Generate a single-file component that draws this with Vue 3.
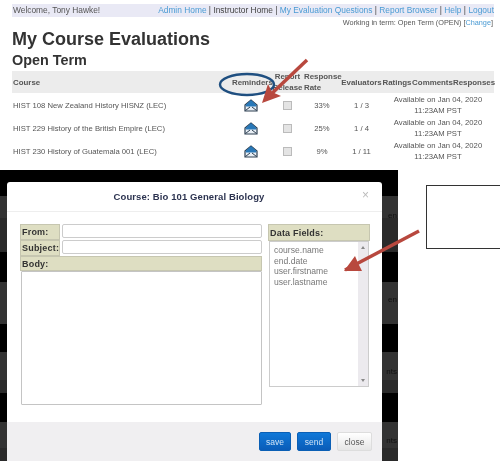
<template>
  <div class="page">
    <div class="top">
      <div class="topbar">
        <span>Welcome, Tony Hawke!</span>
        <span class="links">
          <a>Admin Home</a> | Instructor Home | <a>My Evaluation Questions</a> | <a>Report Browser</a> | <a>Help</a> | <a>Logout</a>
        </span>
      </div>
      <div class="term">Working in term: Open Term (OPEN) [<a>Change</a>]</div>
      <h1>My Course Evaluations</h1>
      <h2>Open Term</h2>
      <table class="courses">
        <thead>
          <tr>
            <th class="left">Course</th>
            <th>Reminders</th>
            <th class="wrap">Report Release</th>
            <th class="wrap left">Response Rate</th>
            <th>Evaluators</th>
            <th>Ratings</th>
            <th>Comments</th>
            <th>Responses</th>
          </tr>
        </thead>
        <tbody>
          <tr v-for="c in courses" :key="c.name">
            <td class="left">{{ c.name }}</td>
            <td>
              <svg class="mail" viewBox="0 0 14 13" width="14" height="13">
                <path d="M1 6 L7 1 L13 6 L13 12 L1 12 Z" fill="#e8eef4" stroke="#2c3e50" stroke-width="1.2" />
                <path d="M1.5 6 L7 1 L12.5 6 L12 7.5 L2 7.5 Z" fill="#2878b8" />
                <path d="M1.5 11.5 L6 8 M12.5 11.5 L8 8" stroke="#2c3e50" stroke-width="1" fill="none" />
              </svg>
            </td>
            <td><span class="check"></span></td>
            <td>{{ c.rate }}</td>
            <td>{{ c.evals }}</td>
            <td colspan="3" class="avail">Available on Jan 04, 2020<br />11:23AM PST</td>
          </tr>
        </tbody>
      </table>
    </div>

    <div class="bottom">
      <div class="backdrop">
        <span class="ghost g1">en</span>
        <span class="ghost g2">en</span>
        <span class="ghost g3">nts</span>
        <span class="ghost g4">nts</span>
        <div class="modal">
          <div class="modal-head">
            <span class="modal-title">Course: Bio 101 General Biology</span>
            <span class="modal-x">×</span>
          </div>
          <div class="modal-body">
            <div class="form-left">
              <div class="field-row">
                <label class="tag">From:</label>
                <input class="inp" type="text" />
              </div>
              <div class="field-row">
                <label class="tag">Subject:</label>
                <input class="inp" type="text" />
              </div>
              <div class="tag body-tag">Body:</div>
              <div class="body-box"></div>
            </div>
            <div class="form-right">
              <div class="tag fields-tag">Data Fields:</div>
              <div class="listbox">
                <div class="list-items">
                  <div v-for="f in fields" :key="f">{{ f }}</div>
                </div>
                <div class="scroll">
                  <span class="up"></span>
                  <span class="down"></span>
                </div>
              </div>
            </div>
          </div>
          <div class="modal-foot">
            <button class="btn blue save">save</button>
            <button class="btn blue send">send</button>
            <button class="btn plain">close</button>
          </div>
        </div>
      </div>
      <div class="side">
        <div class="blank"></div>
      </div>
    </div>

    <svg class="marks" viewBox="0 0 500 463" width="500" height="463">
      <ellipse cx="247" cy="84.5" rx="27" ry="10.5" fill="none" stroke="#1f4f80" stroke-width="2.4" />
      <g fill="none" stroke="#b8483e" stroke-width="3.5">
        <path d="M307 60 L266 99" />
        <path d="M345 270 L419 231" />
      </g>
      <path d="M262 103 L268 84 L272 92 L281 96 Z" fill="#b8483e" />
      <path d="M344 271 L355 256 L358 263 L362 271 Z" fill="#b8483e" />
    </svg>
  </div>
</template>

<script setup>
const courses = [
  { name: 'HIST 108 New Zealand History HISNZ (LEC)', rate: '33%', evals: '1 / 3' },
  { name: 'HIST 229 History of the British Empire (LEC)', rate: '25%', evals: '1 / 4' },
  { name: 'HIST 230 History of Guatemala 001 (LEC)', rate: '9%', evals: '1 / 11' }
]

const fields = ['course.name', 'end.date', 'user.firstname', 'user.lastname']
</script>

<style>
html, body {
  margin: 0;
  background: #fff;
}
</style>

<style scoped>
.page {
  position: relative;
  width: 500px;
  height: 463px;
  overflow: hidden;
  background: #fff;
  font-family: "Liberation Sans", Arial, sans-serif;
  color: #555;
  filter: blur(0.35px);
}

.top {
  height: 170px;
  padding: 4px 6px 0 12px;
  box-sizing: border-box;
}

.topbar {
  display: flex;
  justify-content: space-between;
  height: 13px;
  line-height: 13px;
  padding-left: 1px;
  font-size: 8.4px;
  background: #e9e9f5;
  white-space: nowrap;
}

.links a,
.term a {
  color: #4a9bd4;
}

.links {
  color: #444;
}

.term {
  text-align: right;
  font-size: 7.3px;
  line-height: 10px;
  margin-top: 1px;
  padding-right: 1px;
  color: #555;
}

h1 {
  margin: 0;
  font-size: 18px;
  line-height: 22px;
  color: #333;
}

h2 {
  margin: 0;
  font-size: 14.4px;
  line-height: 20px;
  color: #333;
}

.courses {
  width: 482px;
  margin-top: 1px;
  border-collapse: collapse;
  table-layout: fixed;
  font-size: 7.7px;
}

.courses th {
  height: 22px;
  padding: 0;
  background: #ececec;
  color: #555;
  font-size: 7.9px;
  white-space: nowrap;
}

.courses th.wrap {
  white-space: normal;
  line-height: 11px;
  font-weight: bold;
}

.courses td {
  height: 22px;
  padding: 1px 0 0;
  text-align: center;
  vertical-align: middle;
}

.courses .left {
  text-align: left;
  padding-left: 1px;
}

.avail {
  line-height: 11px;
}

.mail {
  display: block;
  margin: 0 auto;
  transform: translateX(-1px);
}

.check {
  display: inline-block;
  width: 7px;
  height: 7px;
  background: #e4e4e4;
  border: 1px solid #bbb;
  vertical-align: middle;
}

.courses th:nth-child(1) { width: 219px; }
.courses th:nth-child(2) { width: 40px; }
.courses th:nth-child(3) { width: 31px; }
.courses th:nth-child(4) { width: 37px; }
.courses th:nth-child(5) { width: 41px; }
.courses th:nth-child(6) { width: 30px; }
.courses th:nth-child(7) { width: 41px; }
.courses th:nth-child(8) { width: 41px; }

.bottom {
  display: flex;
  height: 293px;
}

.backdrop {
  position: relative;
  width: 398px;
  height: 291px;
  padding: 12px 0 0 7px;
  box-sizing: border-box;
  background: linear-gradient(
    to bottom,
    #000 0, #000 26px,
    #333 26px, #333 48px,
    #2a2a2a 48px, #2a2a2a 82px,
    #000 82px, #000 112px,
    #333 112px, #333 154px,
    #000 154px, #000 182px,
    #333 182px, #333 210px,
    #2a2a2a 210px, #2a2a2a 223px,
    #000 223px, #000 252px,
    #333 252px, #333 278px,
    #2a2a2a 278px
  );
}

.ghost {
  position: absolute;
  right: 1px;
  font-size: 8px;
  color: #111;
}

.g1 { top: 41px; }
.g2 { top: 125px; }
.g3 { top: 197px; }
.g4 { top: 266px; }

.modal {
  position: relative;
  display: flex;
  flex-direction: column;
  width: 375px;
  height: 279px;
  background: #fff;
  border-radius: 3px 3px 0 0;
}

.modal-head {
  display: flex;
  align-items: center;
  justify-content: center;
  position: relative;
  height: 30px;
  flex: none;
  box-sizing: border-box;
  padding-right: 11px;
  border-bottom: 1px solid #eee;
}

.modal-title {
  font-size: 9.5px;
  font-weight: bold;
  color: #2c3350;
  letter-spacing: 0.1px;
}

.modal-x {
  position: absolute;
  right: 13px;
  top: 6px;
  font-size: 12px;
  color: #bbb;
}

.modal-body {
  flex: 1;
  display: flex;
  align-items: flex-start;
  gap: 6px;
  padding: 12px 0 0 13px;
}

.form-left {
  width: 242px;
  flex: none;
}

.form-right {
  width: 102px;
  flex: none;
}

.field-row {
  display: flex;
  height: 16px;
  gap: 2px;
}

.tag {
  display: block;
  box-sizing: border-box;
  background: #dedec2;
  border: 1px solid #c6c6b0;
  font-size: 9px;
  font-weight: bold;
  color: #333;
  line-height: 14px;
  padding-left: 1px;
  letter-spacing: 0.2px;
}

.field-row .tag {
  width: 40px;
  flex: none;
}

.inp {
  flex: 1;
  min-width: 0;
  height: 14px;
  box-sizing: border-box;
  margin: 0;
  border: 1px solid #ccc;
  border-radius: 2px;
  background: #fff;
  padding: 0;
}

.body-tag {
  height: 15px;
}

.body-box {
  box-sizing: border-box;
  height: 134px;
  margin-left: 1px;
  border: 1px solid #c4c4c4;
  border-radius: 1px;
}

.fields-tag {
  height: 17px;
  line-height: 16px;
}

.listbox {
  display: flex;
  box-sizing: border-box;
  width: 100px;
  height: 146px;
  margin-left: 1px;
  border: 1px solid #ccc;
}

.list-items {
  flex: 1;
  padding: 3px 0 0 4px;
  font-size: 8.6px;
  line-height: 10.6px;
  color: #777;
}

.scroll {
  position: relative;
  width: 10px;
  background: #eceaee;
}

.up,
.down {
  position: absolute;
  left: 3px;
  border-left: 2px solid transparent;
  border-right: 2px solid transparent;
}

.up {
  top: 4px;
  border-bottom: 3px solid #888;
}

.down {
  bottom: 4px;
  border-top: 3px solid #888;
}

.modal-foot {
  display: flex;
  justify-content: flex-end;
  gap: 6px;
  height: 39px;
  flex: none;
  box-sizing: border-box;
  padding: 10px 10px 0 0;
  background: #f0eff1;
}

.btn {
  height: 19px;
  padding: 0;
  border-radius: 2px;
  font-family: "Liberation Sans", Arial, sans-serif;
  font-size: 8.5px;
}

.blue {
  border: 1px solid #0a5fb5;
  background: linear-gradient(to bottom, #0f78d8, #0a5cb8);
  color: #cfe2f5;
}

.save { width: 32px; }
.send { width: 34px; }

.plain {
  width: 35px;
  border: 1px solid #ddd;
  background: linear-gradient(to bottom, #fff, #e6e6e6);
  color: #555;
}

.side {
  flex: 1;
  padding: 15px 0 0 28px;
}

.blank {
  height: 64px;
  box-sizing: border-box;
  border: 1px solid #333;
  border-right: none;
}

.marks {
  position: absolute;
  top: 0;
  left: 0;
  pointer-events: none;
}
</style>
